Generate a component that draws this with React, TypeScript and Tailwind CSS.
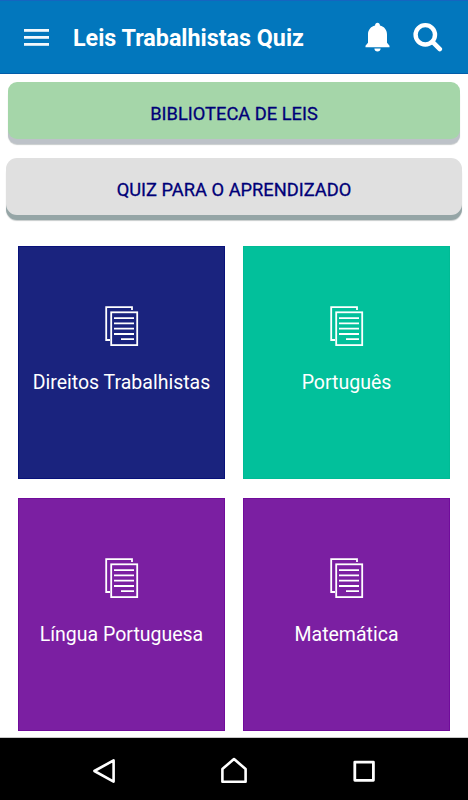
function MenuIcon() {
  return (
    <svg className="mt-px h-[18px] w-[25px]" viewBox="0 0 25 18" fill="#fff" fillOpacity="0.95">
      <rect width="25" height="2.8" />
      <rect y="7" width="25" height="2.8" />
      <rect y="14" width="25" height="2.8" />
    </svg>
  );
}

function BellIcon() {
  return (
    <svg className="h-[30px] w-[25px]" viewBox="0 0 25 30" fill="#fff">
      <path d="M12.5 .8c1.4 0 2.4 1 2.4 2.3v.5c4.4 1.1 7.1 4.4 7.1 8.9v8.3l2.5 2.9v1.5H.5v-1.5L3 20.8v-8.3c0-4.5 2.7-7.8 7.1-8.9v-.5C10.1 1.8 11.1.8 12.5.8z" />
      <path d="M9.4 26.4h6.2c0 1.8-1.3 3.1-3.1 3.1s-3.1-1.3-3.1-3.1z" />
    </svg>
  );
}

function SearchIcon() {
  return (
    <svg className="h-[30px] w-[30px]" viewBox="0 0 30 30" fill="none" stroke="#fff">
      <circle cx="12.3" cy="12.8" r="9.7" strokeWidth="4.4" />
      <path d="M19.8 20.2l7 6.9" strokeWidth="4.6" strokeLinecap="round" />
    </svg>
  );
}

function DocumentsIcon() {
  return (
    <svg className="h-[41px] w-[34px]" viewBox="0 0 34 41" fill="none" stroke="#fff" strokeWidth="1.8">
      <path d="M27 4V1.2H1.2V34H5" />
      <rect x="6.2" y="6.3" width="26" height="32.8" />
      <path d="M9 12.1h20M9 17.4h20M9 22.7h20M9 28h20M16 33.2h13" />
    </svg>
  );
}

const tiles = [
  { label: "Direitos Trabalhistas", style: "bg-[#1a237e] border-[#08117a]" },
  { label: "Português", style: "bg-[#02c09b] border-[#00bb95]" },
  { label: "Língua Portuguesa", style: "bg-[#7b1fa2] border-[#710c9b]" },
  { label: "Matemática", style: "bg-[#7b1fa2] border-[#710c9b]" },
];

export default function App() {
  return (
    <div className="flex h-[800px] w-[468px] flex-col overflow-hidden bg-white font-[Roboto,sans-serif]">
      <header className="flex h-[74px] shrink-0 items-center border-t border-b border-t-[#1565c0] border-b-[#025da9] bg-[#0277bd] pl-6 pr-[25px] text-white">
        <MenuIcon />
        <h1 className="ml-6 flex-1 whitespace-nowrap pt-0.5 text-[23.3px] font-bold leading-7">Leis Trabalhistas Quiz</h1>
        <BellIcon />
        <div className="ml-[23px]">
          <SearchIcon />
        </div>
      </header>

      <main className="flex h-[663px] shrink-0 flex-col">
        <button className="mx-2 mt-2 flex h-[57px] shrink-0 items-center justify-center rounded-[9px] bg-[#a5d6a9] pt-1.5 text-[18.3px] font-normal text-[#000078] shadow-[0_5px_0_#bdc2c8,0_6px_1px_#c8cccc] [-webkit-text-stroke:0.3px_#000078]">
          <span>BIBLIOTECA DE LEIS</span>
        </button>
        <button className="mx-1.5 mt-[19px] flex h-[57px] shrink-0 items-center justify-center rounded-[11px] bg-[#e0e0e0] pt-1.5 text-[18.3px] font-normal text-[#000078] shadow-[0_5px_0_#95a5a6,0_6px_1px_#c8cccc] [-webkit-text-stroke:0.3px_#000078]">
          <span>QUIZ PARA O APRENDIZADO</span>
        </button>
        <div className="mx-[18px] mt-[31px] grid grid-cols-2 gap-x-[18px] gap-y-[19px]">
          {tiles.map((tile) => (
            <section key={tile.label} className={`flex h-[233px] flex-col items-center border pt-[59px] text-white ${tile.style}`}>
              <DocumentsIcon />
              <h2 className="mt-[22px] whitespace-nowrap text-[19.5px] font-normal leading-7">{tile.label}</h2>
            </section>
          ))}
        </div>
      </main>

      <nav className="flex h-[63px] shrink-0 items-center justify-between border-t border-[#c8c8c8] bg-black px-[90px] pt-1">
        <svg className="h-7 w-7" viewBox="0 0 28 28" fill="none" stroke="#fff" strokeWidth="2.6" strokeLinejoin="round">
          <path d="M23.6 3.4v21.2L4.4 14z" />
        </svg>
        <svg className="h-7 w-7" viewBox="0 0 28 28" fill="none" stroke="#fff" strokeWidth="2.6" strokeLinejoin="round">
          <path d="M2.4 24.7V12L14 2l11.6 10v12.7z" />
        </svg>
        <svg className="h-7 w-7" viewBox="0 0 28 28" fill="none" stroke="#fff" strokeWidth="2.8" strokeLinejoin="round">
          <rect x="4.8" y="5.1" width="18.6" height="18.2" />
        </svg>
      </nav>
    </div>
  );
}
